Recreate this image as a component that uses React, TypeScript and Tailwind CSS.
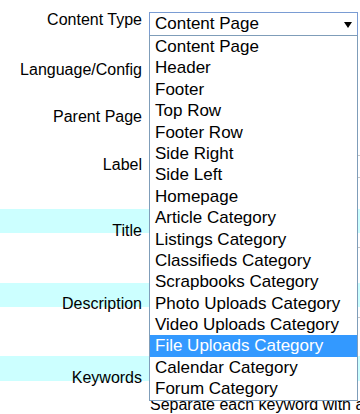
import React from "react";

const items = [
  "Content Page",
  "Header",
  "Footer",
  "Top Row",
  "Footer Row",
  "Side Right",
  "Side Left",
  "Homepage",
  "Article Category",
  "Listings Category",
  "Classifieds Category",
  "Scrapbooks Category",
  "Photo Uploads Category",
  "Video Uploads Category",
  "File Uploads Category",
  "Calendar Category",
  "Forum Category",
];

function Label({ children, pt }: { children: React.ReactNode; pt: string }) {
  return (
    <div className={`w-[142px] shrink-0 text-right text-[16px] leading-[18px] text-black whitespace-nowrap ${pt}`}>
      {children}
    </div>
  );
}

export default function App() {
  return (
    <div
      className="relative w-[360px] h-[414px] overflow-hidden bg-white text-black"
      style={{ fontFamily: '"Liberation Sans", Arial, sans-serif' }}
    >
      {/* Row: Content Type */}
      <div className="flex h-[46px]">
        <Label pt="pt-[11px]">Content Type</Label>
        <div className="ml-[7px] mt-[12px]">
          <div className="w-[209px] h-[24px] border border-[#7a9cd3] bg-white flex items-center justify-between pl-[5px] pr-[5px] text-[17px] leading-[20px]">
            <span>Content Page</span>
            <svg width="8" height="6" viewBox="0 0 8 6" className="mt-[1px]">
              <path d="M0 0 H8 L4 6 Z" fill="#000" />
            </svg>
          </div>
        </div>
      </div>
      {/* Language/Config */}
      <div className="flex h-[48px]">
        <Label pt="pt-[15px]">Language/Config</Label>
      </div>
      {/* Parent Page */}
      <div className="flex h-[47px]">
        <Label pt="pt-[14px]">Parent Page</Label>
      </div>
      {/* Label */}
      <div className="flex h-[68px]">
        <Label pt="pt-[15px]">Label</Label>
        <div className="ml-[7px] flex flex-col">
          <div className="mt-[14px] w-[260px] h-[23px] border border-[#c8c8c8]" />
        </div>
      </div>
      {/* Title */}
      <div className="flex h-[24px] bg-[#ccffff]">
        <Label pt="pt-[13px]">Title</Label>
      </div>
      <div className="flex h-[50px]">
        <div className="ml-[149px] flex flex-col">
          <div className="mt-[14px] w-[260px] h-[1px] bg-[#c8c8c8]" />
        </div>
      </div>
      {/* Description */}
      <div className="flex h-[24px] bg-[#ccffff]">
        <Label pt="pt-[12px]">Description</Label>
      </div>
      <div className="flex h-[49px]">
        <div className="ml-[149px] flex flex-col">
          <div className="mt-[10px] w-[260px] h-[1px] bg-[#c8c8c8]" />
        </div>
      </div>
      {/* Keywords */}
      <div className="flex h-[25px] bg-[#ccffff]">
        <Label pt="pt-[13px]">Keywords</Label>
      </div>
      <div className="pl-[150px] pt-[15px] text-[16px] leading-[18px] whitespace-nowrap">
        Separate each keyword with a
      </div>

      {/* Open dropdown list */}
      <div className="absolute left-[149px] top-[35px] w-[209px] h-[366px] border border-[#7f9db9] bg-white">
        {items.map((it) => (
          <div
            key={it}
            className={`h-[21.4px] leading-[21.4px] pl-[5px] text-[17px] whitespace-nowrap ${
              it === "File Uploads Category" ? "bg-[#3399ff] text-white" : "text-black"
            }`}
          >
            {it}
          </div>
        ))}
      </div>
    </div>
  );
}
